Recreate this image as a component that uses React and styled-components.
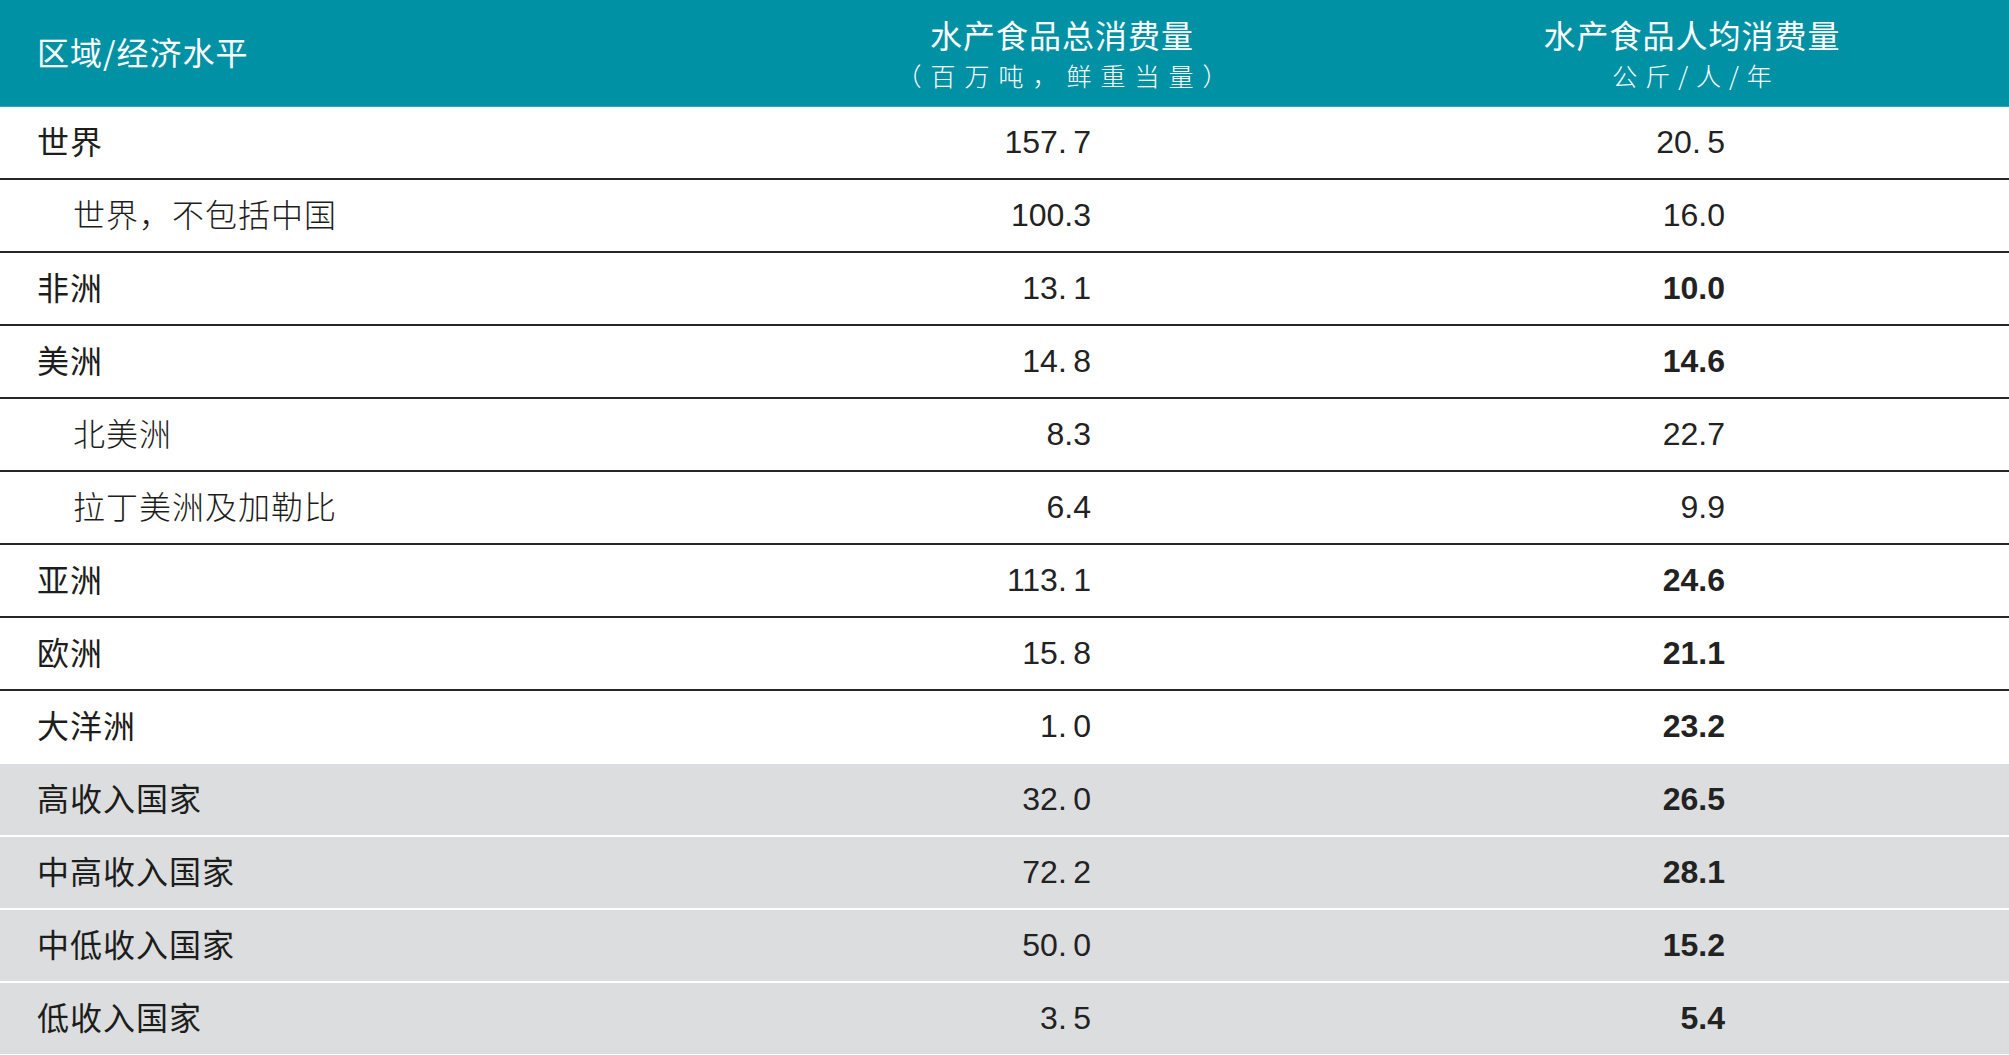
import React from 'react';
import styled, { createGlobalStyle } from 'styled-components';

const GlobalStyle = createGlobalStyle`
  html, body {
    margin: 0;
    padding: 0;
    background: #ffffff;
  }
  body {
    font-family: 'Liberation Sans', 'Noto Sans CJK SC', sans-serif;
    color: #1d1d1b;
  }
`;

const Table = styled.div`
  width: 2009px;
  display: flex;
  flex-direction: column;
`;

const HeaderRow = styled.div`
  display: grid;
  grid-template-columns: 749px 626px 634px;
  height: 107px;
  box-sizing: border-box;
  background: #0191a4;
  border-bottom: 1px solid #3aa8b7;
  color: #ffffff;
`;

const HeaderCell = styled.div`
  display: flex;
  flex-direction: column;
  justify-content: center;
  align-items: ${p => (p.$left ? 'flex-start' : 'center')};
  padding-left: ${p => (p.$left ? '37px' : '0')};
  padding-top: ${p => (p.$left ? '0' : '2px')};
  padding-bottom: ${p => (p.$left ? '5px' : '0')};
`;

const HeaderMain = styled.div`
  font-family: 'Noto Sans CJK SC', sans-serif;
  font-size: 32px;
  line-height: 42px;
  letter-spacing: 1px;
`;

const HeaderSub = styled.div`
  font-family: 'Noto Sans CJK SC', sans-serif;
  font-weight: 300;
  font-size: 25px;
  line-height: 40px;
  letter-spacing: ${p => p.$spacing || '5px'};
  margin-right: -${p => p.$spacing || '5px'};
`;

const Row = styled.div`
  display: grid;
  grid-template-columns: 749px 626px 634px;
  height: 73px;
  box-sizing: border-box;
  background: ${p => (p.$shaded ? '#dcdddf' : '#ffffff')};
  border-bottom: 2px solid
    ${p => (p.$shaded ? '#ffffff' : p.$lined ? '#262626' : 'transparent')};
`;

const LabelCell = styled.div`
  display: flex;
  align-items: center;
  padding-left: ${p => (p.$indent ? '73px' : '37px')};
  padding-bottom: 5px;
  font-family: 'Noto Sans CJK SC', sans-serif;
  font-size: 32px;
  font-weight: ${p => (p.$indent ? 300 : 400)};
  letter-spacing: 1px;
  color: #1d1d1b;
`;

const NumCell = styled.div`
  display: flex;
  align-items: center;
  justify-content: flex-end;
  padding-right: 284px;
  font-family: 'Liberation Sans', sans-serif;
  font-size: 32px;
  font-weight: ${p => (p.$bold ? 700 : 400)};
  color: #222222;
`;

const regions = [
  { label: '世界', total: '157.\u20097', per: '20.\u20095' },
  { label: '世界，不包括中国', indent: true, total: '100.3', per: '16.0' },
  { label: '非洲', total: '13.\u20091', per: '10.0', bold: true },
  { label: '美洲', total: '14.\u20098', per: '14.6', bold: true },
  { label: '北美洲', indent: true, total: '8.3', per: '22.7' },
  { label: '拉丁美洲及加勒比', indent: true, total: '6.4', per: '9.9' },
  { label: '亚洲', total: '113.\u20091', per: '24.6', bold: true },
  { label: '欧洲', total: '15.\u20098', per: '21.1', bold: true },
  { label: '大洋洲', total: '1.\u20090', per: '23.2', bold: true, last: true },
];

const incomes = [
  { label: '高收入国家', total: '32.\u20090', per: '26.5' },
  { label: '中高收入国家', total: '72.\u20092', per: '28.1' },
  { label: '中低收入国家', total: '50.\u20090', per: '15.2' },
  { label: '低收入国家', total: '3.\u20095', per: '5.4' },
];

const App = () => (
  <>
    <GlobalStyle />
    <Table>
      <HeaderRow>
        <HeaderCell $left>
          <HeaderMain>区域/经济水平</HeaderMain>
        </HeaderCell>
        <HeaderCell>
          <HeaderMain>水产食品总消费量</HeaderMain>
          <HeaderSub $spacing="9px">（百万吨，鲜重当量）</HeaderSub>
        </HeaderCell>
        <HeaderCell>
          <HeaderMain>水产食品人均消费量</HeaderMain>
          <HeaderSub $spacing="8px">公斤/人/年</HeaderSub>
        </HeaderCell>
      </HeaderRow>
      {regions.map(r => (
        <Row key={r.label} $lined={!r.last}>
          <LabelCell $indent={r.indent}>{r.label}</LabelCell>
          <NumCell>{r.total}</NumCell>
          <NumCell $bold={r.bold}>{r.per}</NumCell>
        </Row>
      ))}
      {incomes.map(r => (
        <Row key={r.label} $shaded>
          <LabelCell>{r.label}</LabelCell>
          <NumCell>{r.total}</NumCell>
          <NumCell $bold>{r.per}</NumCell>
        </Row>
      ))}
    </Table>
  </>
);

export default App;
